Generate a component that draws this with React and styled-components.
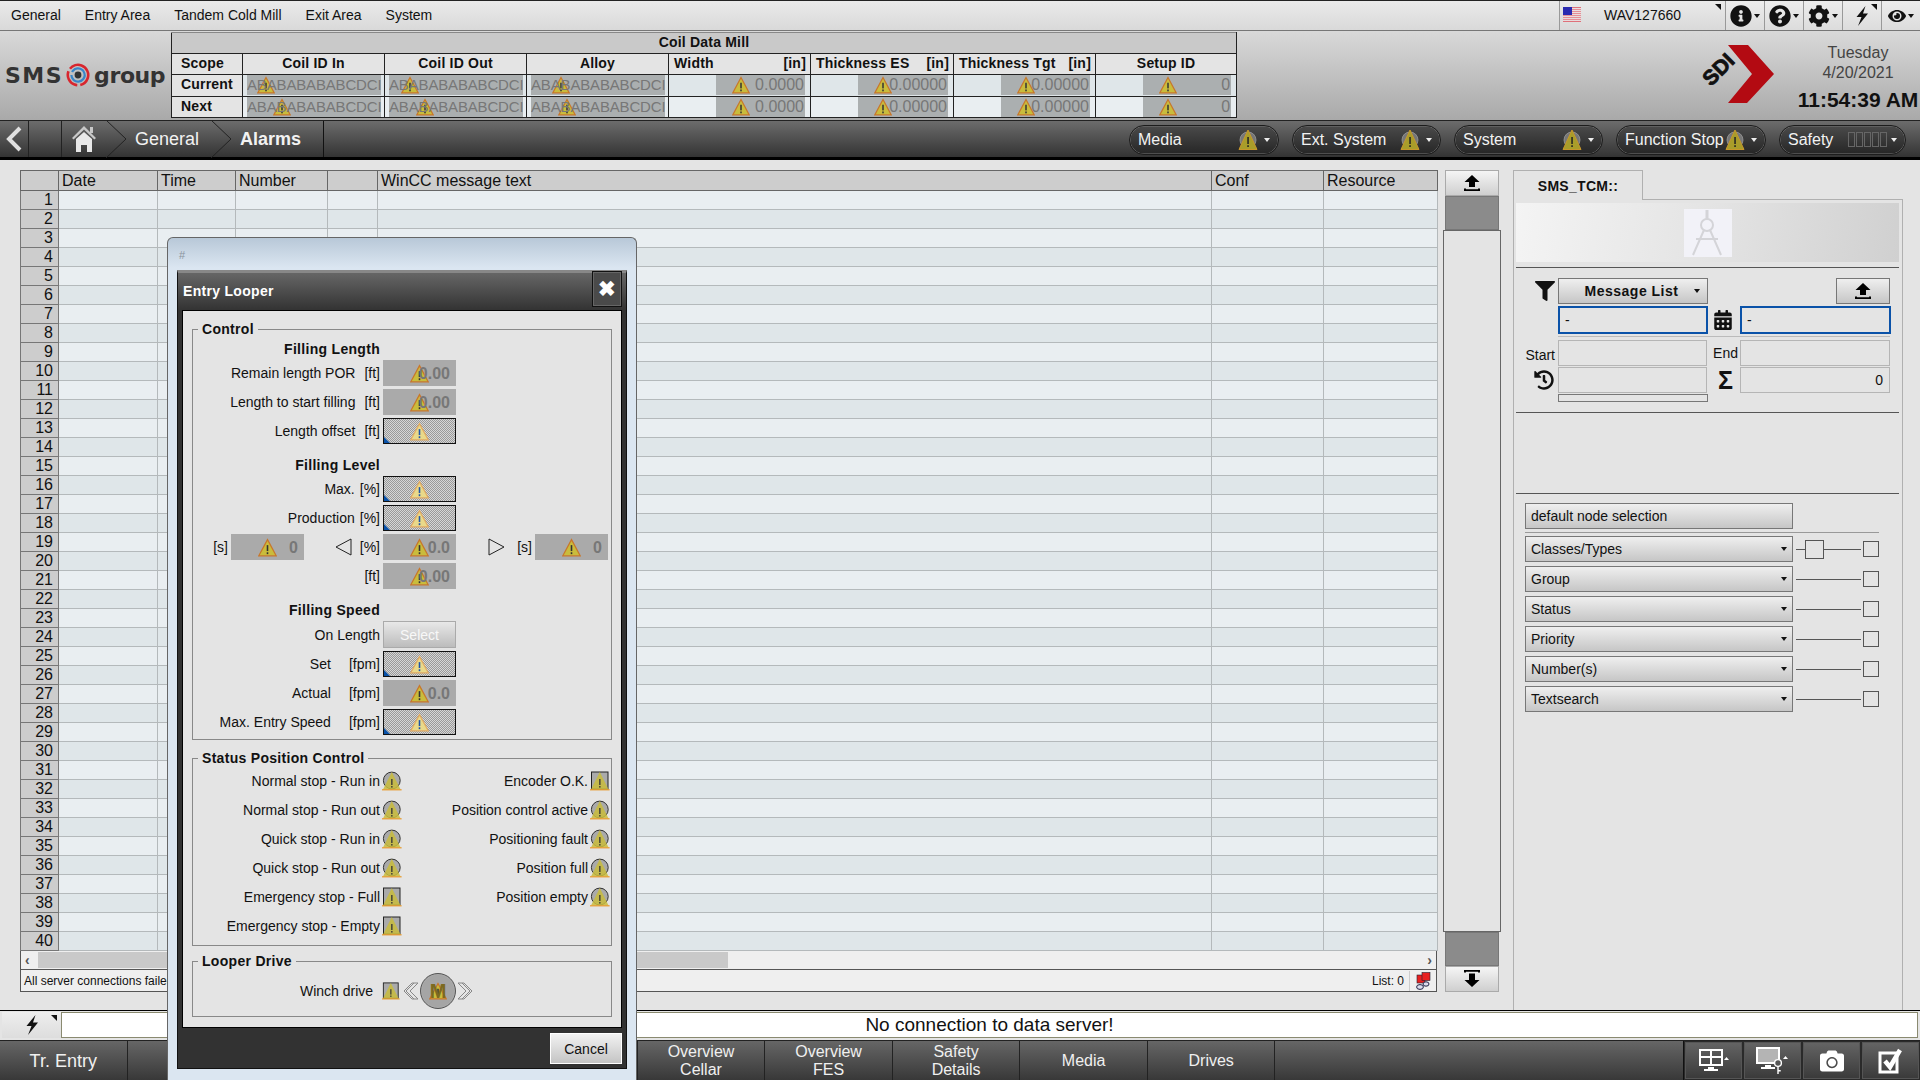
import React from 'react';
import styled, { createGlobalStyle } from 'styled-components';
import { FaCalendarAlt, FaCamera, FaCog, FaEye, FaFilter, FaHistory, FaInfoCircle, FaQuestionCircle } from 'react-icons/fa';

const GlobalStyle = createGlobalStyle`
  * { box-sizing: border-box; }
  html, body { margin: 0; width: 1920px; height: 1080px; overflow: hidden; background: #e4e4e4; }
  body { font-family: "Liberation Sans", Arial, sans-serif; font-size: 14px; color: #111; }
`;

const Screen = styled.div`
  position: relative;
  width: 1920px;
  height: 1080px;
  display: flex;
  flex-direction: column;
  overflow: hidden;
`;

/* top menu */
const MenuBar = styled.div`
  height: 31px;
  display: flex;
  align-items: stretch;
  border-top: 1px solid #222;
  border-bottom: 1px solid #777;
  background: linear-gradient(#eaeaea, #d9d9d9);
`;
const MenuItems = styled.div`
  flex: 1;
  display: flex;
  align-items: center;
  gap: 24px;
  padding: 0 0 2px 11px;
`;
const Locale = styled.div`
  position: relative;
  width: 166px;
  display: flex;
  align-items: center;
  padding: 0 0 2px 3px;
  border-left: 1px solid #999;
  span { margin-left: 23px; }
`;
const CornerMark = styled.i`
  position: absolute;
  top: 3px;
  right: 4px;
  width: 0;
  height: 0;
  border-top: 6px solid #111;
  border-left: 6px solid transparent;
`;
const ToolCell = styled.div`
  position: relative;
  width: 39px;
  display: flex;
  align-items: center;
  justify-content: center;
  gap: 2px;
  border-left: 1px solid #999;
  font-size: 22px;
  background: linear-gradient(#ececec, #dcdcdc);
  &:last-child { font-size: 18px; }
`;
const Caret = styled.i`
  display: inline-block;
  width: 0;
  height: 0;
  border-left: 3px solid transparent;
  border-right: 3px solid transparent;
  border-top: 4px solid ${(p) => p.$color || '#111'};
  margin-left: ${(p) => p.$gap || 0}px;
`;

/* header with coil data */
const Header = styled.div`
  height: 89px;
  display: flex;
  background: linear-gradient(#d9d9d9, #a9a9a9);
`;
const SmsLogo = styled.div`
  width: 171px;
  display: flex;
  align-items: center;
  padding: 0 0 1px 5px;
  font-family: "DejaVu Sans", "Liberation Sans", sans-serif;
  font-size: 22px;
  font-weight: bold;
  color: #333;
`;
const SmsWord = styled.span`
  letter-spacing: 1.5px;
  margin-right: 3px;
`;
const GroupWord = styled.span`
  letter-spacing: -0.4px;
  margin-left: 4px;
`;
const CoilTable = styled.table`
  width: 1065px;
  height: 86px;
  margin-top: 1px;
  border-collapse: collapse;
  table-layout: fixed;
  font-size: 14px;
  letter-spacing: 0.2px;
  th { height: 21px; padding: 0 3px 2px; border: 1px solid #222; background: #e4e4e4; font-weight: bold; }
  td { padding: 0; border: 1px solid #222; }
`;
const TitleCell = styled.th`
  && { background: #c9c9c9; height: 21px; border-top-color: #888; }
`;
const ScopeCell = styled.th`
  && { text-align: ${(p) => (p.$left ? 'left' : 'center')}; padding-left: 9px; }
`;
const HeadSplit = styled.div`
  display: flex;
  justify-content: space-between;
  padding-right: 1px;
  padding-left: 2px;
`;
const DataCell = styled.td`
  && { background: ${(p) => (p.$alt ? '#e9eef1' : '#dfe6e9')}; height: 21px; }
`;
const Shade = styled.div`
  position: relative;
  isolation: isolate;
  height: 20px;
  line-height: 20px;
  margin: 0 ${(p) => (p.$text ? 3 : 5)}px 0 ${(p) => (p.$text ? 4 : 47)}px;
  padding-right: 1px;
  background: #abafb0;
  color: #777;
  font-size: ${(p) => (p.$text ? 15 : 16)}px;
  font-weight: normal;
  letter-spacing: ${(p) => (p.$text ? -0.16 : 0)}px;
  text-align: ${(p) => (p.$text ? 'left' : 'right')};
  white-space: nowrap;
  overflow: hidden;
`;
const WarnSlot = styled.span`
  position: absolute;
  z-index: -1;
  left: ${(p) => p.$left}px;
  top: 50%;
  height: ${(p) => p.$size}px;
  margin-top: ${(p) => -p.$size / 2}px;
  line-height: 0;
`;
const ClockBox = styled.div`
  flex: 1;
  display: flex;
  justify-content: flex-end;
  padding-top: 12px;
`;
const ClockText = styled.div`
  width: 124px;
  text-align: center;
  color: #444;
  font-size: 16px;
  line-height: 20px;
  b { display: block; color: #111; font-size: 21px; line-height: 24px; margin-top: 5px; white-space: nowrap; }
`;
const SdiSvg = styled.svg`
  margin: 2px 20px 0 0;
  overflow: visible;
`;

/* breadcrumb bar */
const NavBar = styled.div`
  height: 40px;
  display: flex;
  align-items: stretch;
  padding-right: 14px;
  border-top: 1px solid #222;
  border-bottom: 3px solid #000;
  background: linear-gradient(#6c6c6c, #333);
  color: #f2f2f2;
`;
const NavSlot = styled.div`
  width: ${(p) => p.$w}px;
  display: flex;
  align-items: center;
  justify-content: center;
  border-right: 1px solid #222;
`;
const Crumbs = styled.div`
  width: 262px;
  display: flex;
  align-items: center;
  border-right: 1px solid #111;
  font-size: 18px;
`;
const Crumb = styled.span`
  margin: 0 12px 0 9px;
  font-weight: ${(p) => (p.$on ? 'bold' : 'normal')};
`;
const HomeSlot = styled.div`
  width: 44px;
  display: flex;
  justify-content: center;
`;
const Pills = styled.div`
  margin-left: auto;
  padding-top: 1px;
  display: flex;
  align-items: center;
  gap: 13px;
`;
const Pill = styled.div`
  width: ${(p) => p.$w}px;
  height: 30px;
  display: flex;
  align-items: center;
  padding: 0 8px;
  border: 1px solid #1c1c1c;
  border-radius: 15px;
  box-shadow: 0 0 0 0.5px #777 inset;
  background: linear-gradient(#4a4a4a, #262626);
  font-size: 16px;
  white-space: nowrap;
  span { flex: 1; }
`;
const SafetyBars = styled.div`
  display: flex;
  gap: 1px;
  i { display: block; width: 7px; height: 15px; border: 1px solid #666; }
`;

/* main area */
const Main = styled.div`
  height: 850px;
  display: flex;
  padding: 10px 0 0 20px;
  background: #e4e4e4;
`;
const ListColumn = styled.div`
  width: 1417px;
  height: 822px;
  display: flex;
  flex-direction: column;
`;
const AlarmTable = styled.table`
  width: 1417px;
  border-collapse: collapse;
  table-layout: fixed;
  font-size: 16px;
  th {
    height: 20px;
    padding: 0 0 0 3px;
    border: 1px solid #666;
    background: #cdcdcd;
    text-align: left;
    font-weight: normal;
    white-space: nowrap;
    overflow: hidden;
  }
  td { height: 19px; padding: 0; border: 1px solid #b4b9bb; line-height: 18px; }
  tr:nth-child(odd) td { background: #e9eef1; }
  tr:nth-child(even) td { background: #dfe6e9; }
  && td:first-child { background: #cdcdcd; border-color: #777; text-align: right; padding-right: 5px; }
`;
const HScroll = styled.div`
  height: 19px;
  display: flex;
  align-items: center;
  border: 1px solid #555;
  border-top: 0;
  background: #efefef;
  padding: 0 4px;
  color: #555;
  font-weight: bold;
  font-size: 14px;
`;
const HThumb = styled.div`
  width: 690px;
  height: 16px;
  margin-left: 8px;
  margin-right: auto;
  background: #c9c9c9;
`;
const ListStatus = styled.div`
  height: 22px;
  display: flex;
  align-items: center;
  border: 1px solid #555;
  border-top: 0;
  background: #efefef;
  font-size: 12px;
  padding-left: 3px;
  span:first-child { flex: 1; }
`;
const ListCount = styled.span`
  padding-right: 5px;
  border-right: 1px solid #ccc;
  line-height: 20px;
`;
const StatusFlag = styled.div`
  width: 26px;
  display: flex;
  justify-content: center;
`;
const ScrollColumn = styled.div`
  width: 58px;
  height: 822px;
  margin-left: 6px;
  display: flex;
  flex-direction: column;
  align-items: center;
`;
const ScrollBtn = styled.div`
  width: 54px;
  height: 26px;
  flex: none;
  display: flex;
  align-items: center;
  justify-content: center;
  border: 1px solid #aaa;
  background: linear-gradient(#f5f5f5, #cfcfcf);
`;
const ScrollEnd = styled.div`
  width: 54px;
  height: 34px;
  flex: none;
  background: #8b8b8b;
  border: 1px solid #777;
`;
const ScrollTrack = styled.div`
  width: 58px;
  flex: 1;
  border: 1px solid #666;
  background: #e4e4e4;
`;

/* right side panel */
const SideColumn = styled.div`
  width: 390px;
  margin-left: 12px;
  display: flex;
  flex-direction: column;
`;
const Tab = styled.div`
  position: relative;
  z-index: 1;
  width: 130px;
  height: 30px;
  margin-bottom: -1px;
  display: flex;
  align-items: center;
  justify-content: center;
  border: 1px solid #b0b0b0;
  border-bottom: 0;
  background: #e4e4e4;
  font-weight: bold;
  letter-spacing: 0.3px;
`;
const SidePanel = styled.div`
  flex: 1;
  padding: 3px 3px 0 2px;
  border: 1px solid #b0b0b0;
  border-bottom: 0;
`;
const Banner = styled.div`
  height: 59px;
  display: flex;
  align-items: center;
  justify-content: center;
  background: linear-gradient(100deg, #f4f4f4, #e2e2e2 55%, #d0d0d0);
`;
const CompassTile = styled.div`
  width: 48px;
  height: 48px;
  background: #f2f2f8;
`;
const Rule = styled.div`
  height: 1px;
  margin-top: ${(p) => p.$top}px;
  background: #555;
`;
const FormRow = styled.div`
  display: grid;
  grid-template-columns: 42px 150px 32px 151px;
  align-items: center;
  height: ${(p) => p.$h}px;
  margin-top: ${(p) => p.$top || 0}px;
  font-size: 14px;
`;
const IconCell = styled.div`
  display: flex;
  justify-content: flex-end;
  padding-top: ${(p) => p.$top || 0}px;
  padding-right: ${(p) => p.$pad ?? 3}px;
  font-size: ${(p) => p.$size || 20}px;
  font-weight: bold;
`;
const CellLabel = styled.span`
  font-weight: normal;
`;
const RawButton = styled.div`
  height: 26px;
  display: flex;
  align-items: center;
  border: 1px solid #777;
  background: linear-gradient(#efefef, #c6c6c6);
`;
const ListSelect = styled(RawButton)`
  justify-content: center;
  padding-left: 19px;
  font-weight: bold;
  letter-spacing: 0.5px;
  i { margin-left: 16px; }
`;
const UploadButton = styled(RawButton)`
  width: 54px;
  justify-content: center;
  margin-left: 96px;
`;
const BlueInput = styled.div`
  height: 28px;
  padding: 4px 5px;
  border: 2px solid #0a52a8;
  font-size: 14px;
`;
const SoftDivider = styled.div`
  height: 1px;
  margin: 2px 9px 0 42px;
  background: #bbb;
`;
const ReadBox = styled.div`
  height: 26px;
  margin: 0 1px 0 0;
  line-height: 24px;
  padding-right: 6px;
  text-align: right;
  border: 1px solid #b5b5b5;
`;
const ThinBar = styled.div`
  height: 8px;
  width: 150px;
  margin: 1px 0 0 42px;
  border: 1px solid #777;
`;
const FilterBlock = styled.div`
  padding: 9px 20px 0 9px;
  width: 100%;
`;
const WideButton = styled(RawButton)`
  width: 268px;
  padding-left: 5px;
`;
const ThinRule = styled.div`
  height: 1px;
  margin: 3px 0;
  background: #999;
`;
const FilterRow = styled.div`
  display: grid;
  grid-template-columns: 268px 1fr 16px;
  align-items: center;
  gap: 2px;
  height: 26px;
  margin-bottom: 4px;
`;
const FilterSelect = styled(RawButton)`
  justify-content: space-between;
  padding: 0 5px;
`;
const SliderTrack = styled.div`
  position: relative;
  height: 1px;
  margin-left: 1px;
  background: #555;
`;
const SliderThumb = styled.div`
  position: absolute;
  left: 9px;
  top: -9px;
  width: 19px;
  height: 19px;
  border: 1px solid #555;
  background: #e4e4e4;
`;
const TickBox = styled.div`
  width: 16px;
  height: 16px;
  border: 1px solid #555;
`;

/* command and bottom bars */
const CommandBar = styled.div`
  height: 30px;
  display: flex;
  padding: 1px 2px 2px 2px;
  border-top: 1px solid #000;
  background: #e4e4e4;
`;
const CommandBtn = styled.div`
  position: relative;
  width: 59px;
  display: flex;
  align-items: center;
  justify-content: center;
  background: linear-gradient(#eee, #ddd);
`;
const CommandText = styled.div`
  flex: 1;
  display: flex;
  align-items: center;
  justify-content: center;
  border: 1px solid #8a8a70;
  background: #fff;
  font-size: 19px;
`;
const BottomBar = styled.div`
  height: 40px;
  display: flex;
  border-top: 1px solid #222;
  background: linear-gradient(#666, #383838);
  color: #f0f0f0;
`;
const BottomBtn = styled.div`
  width: 127.55px;
  display: flex;
  align-items: center;
  justify-content: center;
  border-right: 1px solid #222;
  font-size: ${(p) => p.$size || 16}px;
  line-height: 18px;
  text-align: center;
`;
const BottomTools = styled.div`
  margin-left: auto;
  display: flex;
  border-left: 1px solid #111;
`;
const BottomTool = styled.div`
  width: 59px;
  display: flex;
  align-items: center;
  justify-content: center;
  border: 1px solid #2a2a2a;
  box-shadow: 0 0 0 1px #555 inset;
  color: #fff;
  font-size: 24px;
`;

/* entry looper window */
const Window = styled.div`
  position: absolute;
  left: 167px;
  top: 237px;
  width: 470px;
  height: 843px;
  padding: 32px 9px 11px;
  border: 1px solid #666;
  border-bottom: 0;
  border-radius: 6px 6px 0 0;
  background: linear-gradient(#b8c8d8, #dbe6f1 30px);
  z-index: 5;
`;
const WindowTag = styled.div`
  position: absolute;
  left: 11px;
  top: 11px;
  font-size: 11px;
  color: #8a949e;
`;
const WindowFrame = styled.div`
  height: 100%;
  display: flex;
  flex-direction: column;
  border: 1px solid #111;
  border-top: 3px solid #888;
  background: #323232;
`;
const TitleBar = styled.div`
  height: 37px;
  flex: none;
  display: flex;
  align-items: center;
  justify-content: space-between;
  padding: 0 0 2px 5px;
  background: linear-gradient(#666, #333);
  color: #fff;
  font-weight: bold;
  letter-spacing: 0.3px;
`;
const CloseBtn = styled.div`
  width: 30px;
  height: 36px;
  margin: -2px 4px 0 0;
  display: flex;
  align-self: flex-start;
  align-items: center;
  justify-content: center;
  border: 1px solid #111;
  box-shadow: 0 0 0 1px #666 inset;
  background: #4a4a4a;
  font-size: 21px;
`;
const WindowBody = styled.div`
  margin: 0 4px;
  padding: 0 9px 10px;
  border: 1px solid #000;
  background: #e4e4e4;
`;
const Group = styled.fieldset`
  margin: ${(p) => p.$top}px 0 0;
  padding: 0 0 ${(p) => p.$bottom}px;
  border: 1px solid #888;
`;
const GroupTitle = styled.legend`
  margin-left: 5px;
  padding: 0 4px;
  height: 16px;
  line-height: 16px;
  font-weight: bold;
  letter-spacing: 0.3px;
`;
const Section = styled.div`
  display: flex;
  flex-direction: column;
  gap: 3px;
  margin-top: ${(p) => p.$top}px;
`;
const SectionHead = styled.div`
  width: 187px;
  height: 15px;
  line-height: 15px;
  text-align: right;
  font-weight: bold;
  letter-spacing: 0.3px;
`;
const ControlRow = styled.div`
  display: grid;
  grid-template-columns: 187px 73px 1fr;
  column-gap: 3px;
  align-items: center;
  min-height: 26px;
`;
const LabelCell = styled.div`
  display: flex;
  align-items: center;
  justify-content: flex-end;
  gap: ${(p) => p.$gap ?? 9}px;
  width: ${(p) => (p.$w ? `${p.$w}px` : 'auto')};
  flex: ${(p) => (p.$grow ? 1 : 'none')};
  white-space: nowrap;
`;
const Field = styled.div`
  position: relative;
  isolation: isolate;
  height: 26px;
  width: 73px;
  flex: none;
  padding-right: 6px;
  line-height: 27px;
  text-align: right;
  background: #aaa;
  color: #777;
  font-size: 16px;
  font-weight: bold;
`;
const HatchField = styled.div`
  position: relative;
  isolation: isolate;
  height: 26px;
  border: 1px solid #111;
  background: repeating-conic-gradient(#999 0 25%, #d6d6d6 0 50%) 0 0 / 2px 2px;
  &::after {
    content: '';
    position: absolute;
    left: 0;
    bottom: 0;
    width: 6px;
    height: 6px;
    background: #0a52a8;
    clip-path: polygon(0 0, 100% 100%, 0 100%);
  }
`;
const SelectBtn = styled.div`
  height: 27px;
  display: flex;
  align-items: center;
  justify-content: center;
  border: 1px solid #aaa;
  background: linear-gradient(#e8e8e8, #bcbcbc);
  color: #f8f8f8;
`;
const SideRow = styled.div`
  display: flex;
  align-items: center;
  gap: 3px;
`;
const StatusGrid = styled.div`
  display: grid;
  grid-template-columns: 209px 208px;
  grid-auto-rows: 29px;
`;
const StatusItem = styled.div`
  display: flex;
  align-items: center;
  justify-content: flex-end;
  gap: 2px;
  white-space: nowrap;
`;
const DriveRow = styled.div`
  height: 38px;
  margin-top: 3px;
  padding-left: 107px;
  display: flex;
  align-items: center;
`;
const DriveLabel = styled.span`
  margin-right: 9px;
`;
const DriveLamp = styled.span`
  margin-right: 3px;
  line-height: 0;
`;
const Motor = styled.div`
  position: relative;
  isolation: isolate;
  width: 36px;
  height: 36px;
  margin: 0 1px;
  display: flex;
  align-items: center;
  justify-content: center;
  border: 1px solid #555;
  border-radius: 50%;
  box-shadow: 0 0 0 1px #aaa inset;
  background: #a5a5a5;
  font-size: 20px;
  font-weight: bold;
  color: #7c6a20;
`;
const WindowFooter = styled.div`
  flex: 1;
  display: flex;
  justify-content: flex-end;
  align-items: flex-start;
  padding: 5px 4px 0 0;
`;
const CancelBtn = styled.div`
  width: 72px;
  height: 31px;
  display: flex;
  align-items: center;
  justify-content: center;
  border: 1px solid #fff;
  background: linear-gradient(#f2f2f2, #c4c4c4);
`;

/* drawings */
const WARN_TONES = {
  solid: { fill: '#c9bc3c', line: '#c8772b', mark: '#333' },
  faded: { fill: '#e9d98a', line: '#e2ab63', mark: '#1f55a8' },
};

const Warn = ({ size = 18, tone = 'solid' }) => {
  const t = WARN_TONES[tone];
  return (
    <svg width={size} height={size} viewBox="0 0 24 24">
      <polygon points="12,2 23,22.5 1,22.5" fill={t.fill} stroke={t.line} strokeWidth="1.6" />
      <rect x="11" y="9" width="2" height="7.5" fill={t.mark} />
      <rect x="11" y="18" width="2" height="2.4" fill={t.mark} />
    </svg>
  );
};

const Lamp = ({ square, size = 20 }) => (
  <svg width={size} height={size} viewBox="0 0 20 20">
    {square ? (
      <rect x="1.5" y="1" width="16.5" height="17" fill="#aaa" stroke="#222" />
    ) : (
      <circle cx="9.8" cy="9.5" r="8.4" fill="#aaa" stroke="#333" />
    )}
    <polygon points="9.8,1 18.6,18.6 1,18.6" fill="#c9bc3c" opacity="0.85" />
    <rect x="0" y="18.2" width="19.6" height="1.2" fill="#e89a2a" />
    <rect x="9.2" y="8" width="1.3" height="6" fill="#333" />
    <rect x="9.2" y="15" width="1.3" height="1.6" fill="#333" />
  </svg>
);

const PillWarn = () => (
  <svg width="20" height="22" viewBox="0 0 20 22">
    <circle cx="10" cy="11" r="8" fill="#777" stroke="#999" strokeWidth="0.8" />
    <polygon points="10,1 19,20.5 1,20.5" fill="#a99d2a" stroke="#c8972a" strokeWidth="1" />
    <rect x="9.3" y="8" width="1.5" height="7" fill="#222" />
    <rect x="9.3" y="16.2" width="1.5" height="1.8" fill="#222" />
  </svg>
);

const BoltIcon = ({ height = 20 }) => (
  <svg width={height * 0.7} height={height} viewBox="0 0 14 20" fill="#111">
    <polygon points="10.5,0 1.5,11 6.5,11 3,20 13,7.5 8,7.5" />
  </svg>
);

const TrayArrow = ({ down }) => (
  <svg width="18" height="18" viewBox="0 0 18 18" fill="#000">
    {down ? (
      <>
        <path d="M1 0h16v2.4h-2v-.6H3v.6H1z" />
        <polygon points="6,3.5 12,3.5 12,10 16.5,10 9,17 1.5,10 6,10" />
      </>
    ) : (
      <>
        <polygon points="9,1 16.5,8 12,8 12,13 6,13 6,8 1.5,8" />
        <path d="M1 17h16v-2.4h-2v.6H3v-.6H1z" />
      </>
    )}
  </svg>
);

const UsFlag = () => (
  <svg width="18" height="15" viewBox="0 0 18 15">
    {[0, 1, 2, 3, 4, 5, 6, 7].map((i) => (
      <rect key={i} y={i * 2} width="18" height="1" fill="#d9545f" />
    ))}
    <rect y="0.5" width="18" height="14" fill="#f4d8da" opacity="0.45" />
    <rect width="9" height="8" fill="#2a2ab0" />
  </svg>
);

const SmsMark = () => (
  <svg width="24" height="24" viewBox="0 0 24 24" fill="none">
    <circle cx="12" cy="12" r="10.2" stroke="#d8262e" strokeWidth="2.6" strokeDasharray="26 3 19 3 13 0" transform="rotate(-70 12 12)" />
    <circle cx="12" cy="12" r="6.6" stroke="#3a86c8" strokeWidth="2.2" strokeDasharray="16 3 14 0" transform="rotate(40 12 12)" />
    <circle cx="12" cy="12" r="3.4" fill="#333" />
  </svg>
);

const SdiLogo = () => (
  <SdiSvg width="74" height="60" viewBox="0 0 74 60">
    <polygon points="26,0 46,0 72,29 45,58 26,58 50,29" fill="#b30a12" />
    <text x="0" y="0" transform="translate(9 42) rotate(-45)" fontFamily="Liberation Sans" fontWeight="bold" fontSize="21" stroke="#111" strokeWidth="0.8" fill="#111">SDI</text>
  </SdiSvg>
);

const HomeIcon = () => (
  <svg width="26" height="28" viewBox="0 0 26 28" fill="#c8c8c8">
    <path d="M13 1 25 13l-1.6 1.6L13 4.6 2.6 14.6 1 13z" />
    <rect x="19" y="2" width="3" height="6" />
    <path d="M5 14 13 7l8 7v13h-5v-7h-6v7H5z" fill="#e8e8e8" />
  </svg>
);

const CrumbSep = () => (
  <svg width="20" height="38" viewBox="0 0 20 38">
    <path d="M0 0 20 19 0 38" fill="none" stroke="#222" />
  </svg>
);

const BackIcon = () => (
  <svg width="18" height="26" viewBox="0 0 18 26">
    <path d="M15 2 4 13l11 11" fill="none" stroke="#e0e0e0" strokeWidth="4" />
  </svg>
);

const CompassIcon = () => (
  <svg width="48" height="48" viewBox="0 0 48 48" fill="none" stroke="#d4d4d8" strokeWidth="2">
    <path d="M23 1v10" strokeWidth="3" />
    <circle cx="23" cy="16" r="6" />
    <path d="M20 21 9 46M26 21l11 25M12 30h22" />
  </svg>
);

const SigmaGlyph = styled.span`
  font-size: 25px;
  line-height: 26px;
  font-weight: bold;
`;

const FlagsIcon = () => (
  <svg width="15" height="18" viewBox="0 0 15 18">
    <rect x="1" y="3" width="8" height="8" fill="#e82020" stroke="#223" strokeWidth="0.6" />
    <rect x="6" y="0.5" width="8" height="8" fill="#e82020" stroke="#223" strokeWidth="0.6" />
    <ellipse cx="4" cy="15" rx="3.4" ry="2.4" fill="#dde" stroke="#224" />
    <ellipse cx="10" cy="12" rx="3" ry="2.2" fill="#dde" stroke="#224" />
  </svg>
);

const DoubleChevron = ({ left }) => (
  <svg width="16" height="18" viewBox="0 0 16 18" fill="none" stroke="#888">
    {left ? <path d="M15 1H9L1 9l8 8h6L7 9zM11 1 3 9l8 8" /> : <path d="M1 1h6l8 8-8 8H1l8-8zM5 1l8 8-8 8" />}
  </svg>
);

const TriangleOutline = ({ left }) => (
  <svg width="17" height="18" viewBox="0 0 17 18" fill="none" stroke="#222">
    <polygon points={left ? '16,1 16,17 1,9' : '1,1 1,17 16,9'} />
  </svg>
);

const MonitorGrid = () => (
  <svg width="30" height="24" viewBox="0 0 30 24" fill="#fff">
    <path d="M0 0h24v17H0zm2 2v5h9V2zm11 0v5h9V2zM2 9v6h9V9zm11 0v6h9V9z" fillRule="evenodd" />
    <path d="M9 18h6v2h4v2H5v-2h4z" />
    <polygon points="25,11 30,11 27.5,8" />
  </svg>
);

const MonitorKey = () => (
  <svg width="34" height="28" viewBox="0 0 34 28" fill="#fff">
    <path d="M0 0h24v17H0z" />
    <rect x="2" y="2" width="20" height="13" fill="#b4b4b4" />
    <path d="M9 18h6v2h4v2H5v-2h4z" />
    <circle cx="22" cy="16" r="3.4" fill="#555" stroke="#fff" strokeWidth="1.4" />
    <path d="M21.3 19h1.4v8h-1.4zM22.7 23h2v1.4h-2z" />
    <polygon points="27,12 32,12 29.5,9" />
  </svg>
);

const CheckBoxIcon = () => (
  <svg width="26" height="28" viewBox="0 0 26 28" fill="none" stroke="#fff">
    <path d="M2 6h17v19H2z" strokeWidth="3" />
    <path d="M7 14l5 6 10-17" strokeWidth="4.5" />
  </svg>
);

/* data */
const COIL_IDS = ['ABABABABABCDCI', 'ABABABABABCDCI', 'ABABABABABCDCI'];
const CURRENT_MARKS = [10, 12, 21];
const NEXT_MARKS = [26, 27, 27];
const NUMERICS = ['0.0000', '0.00000', '0.00000', '0'];
const TOP_MENU = ['General', 'Entry Area', 'Tandem Cold Mill', 'Exit Area', 'System'];
const STATUS_ROWS = [
  ['Normal stop - Run in', false, 'Encoder O.K.', true],
  ['Normal stop - Run out', false, 'Position control active', false],
  ['Quick stop - Run in', false, 'Positioning fault', false],
  ['Quick stop - Run out', false, 'Position full', false],
  ['Emergency stop - Full', true, 'Position empty', false],
  ['Emergency stop - Empty', true, null, false],
];
const FILTERS = ['Classes/Types', 'Group', 'Status', 'Priority', 'Number(s)', 'Textsearch'];
const COLUMN_WIDTHS = [38, 99, 78, 92, 50, 834, 112, 114];
const COLUMNS = ['', 'Date', 'Time', 'Number', '', 'WinCC message text', 'Conf', 'Resource'];
const ROW_NUMBERS = Array.from({ length: 40 }, (_, i) => i + 1);

const CoilRow = ({ name, alt, marks }) => (
  <tr>
    <ScopeCell as="th" $left>{name}</ScopeCell>
    {COIL_IDS.map((id, i) => (
      <DataCell key={i} $alt={alt}>
        <Shade $text>
          {id}
          <WarnSlot $left={marks[i]} $size={18}><Warn /></WarnSlot>
        </Shade>
      </DataCell>
    ))}
    {NUMERICS.map((v, i) => (
      <DataCell key={i} $alt={alt}>
        <Shade>
          {v}
          <WarnSlot $left={16} $size={18}><Warn /></WarnSlot>
        </Shade>
      </DataCell>
    ))}
  </tr>
);

const ValueField = ({ value }) => (
  <Field>
    <WarnSlot $left={27} $size={19}><Warn size={19} /></WarnSlot>
    {value}
  </Field>
);

const InputField = () => (
  <HatchField>
    <WarnSlot $left={26} $size={19}><Warn size={19} tone="faded" /></WarnSlot>
  </HatchField>
);

const Labeled = ({ text, unit, gap }) => (
  <LabelCell $gap={gap}>
    <span>{text}</span>
    <span>{unit}</span>
  </LabelCell>
);

const EntryLooper = () => (
  <Window>
    <WindowTag>#</WindowTag>
    <WindowFrame>
      <TitleBar>
        Entry Looper
        <CloseBtn>✖</CloseBtn>
      </TitleBar>
      <WindowBody>
        <Group $top={10} $bottom={4}>
          <GroupTitle>Control</GroupTitle>
          <Section $top={5}>
            <SectionHead>Filling Length</SectionHead>
            <ControlRow><Labeled text="Remain length POR" unit="[ft]" /><ValueField value="0.00" /></ControlRow>
            <ControlRow><Labeled text="Length to start filling" unit="[ft]" /><ValueField value="0.00" /></ControlRow>
            <ControlRow><Labeled text="Length offset" unit="[ft]" /><InputField /></ControlRow>
          </Section>
          <Section $top={14}>
            <SectionHead>Filling Level</SectionHead>
            <ControlRow><Labeled text="Max." unit="[%]" gap={5} /><InputField /></ControlRow>
            <ControlRow><Labeled text="Production" unit="[%]" gap={5} /><InputField /></ControlRow>
            <ControlRow>
              <SideRow>
                <LabelCell $w={35}>[s]</LabelCell>
                <ValueField value="0" />
                <LabelCell $grow $gap={8}><TriangleOutline left /><span>[%]</span></LabelCell>
              </SideRow>
              <ValueField value="0.0" />
              <SideRow>
                <LabelCell $w={46}><TriangleOutline /></LabelCell>
                <LabelCell $w={24}>[s]</LabelCell>
                <ValueField value="0" />
              </SideRow>
            </ControlRow>
            <ControlRow><LabelCell>[ft]</LabelCell><ValueField value="0.00" /></ControlRow>
          </Section>
          <Section $top={14}>
            <SectionHead>Filling Speed</SectionHead>
            <ControlRow><LabelCell>On Length</LabelCell><SelectBtn>Select</SelectBtn></ControlRow>
            <ControlRow><Labeled text="Set" unit="[fpm]" gap={18} /><InputField /></ControlRow>
            <ControlRow><Labeled text="Actual" unit="[fpm]" gap={18} /><ValueField value="0.0" /></ControlRow>
            <ControlRow><Labeled text="Max. Entry Speed" unit="[fpm]" gap={18} /><InputField /></ControlRow>
          </Section>
        </Group>
        <Group $top={10} $bottom={5}>
          <GroupTitle>Status Position Control</GroupTitle>
          <StatusGrid>
            {STATUS_ROWS.map(([left, leftSquare, right, rightSquare]) => (
              <React.Fragment key={left}>
                <StatusItem>{left}<Lamp square={leftSquare} /></StatusItem>
                {right ? <StatusItem>{right}<Lamp square={rightSquare} /></StatusItem> : <span />}
              </React.Fragment>
            ))}
          </StatusGrid>
        </Group>
        <Group $top={7} $bottom={6}>
          <GroupTitle>Looper Drive</GroupTitle>
          <DriveRow>
            <DriveLabel>Winch drive</DriveLabel>
            <DriveLamp><Lamp square size={18} /></DriveLamp>
            <DoubleChevron left />
            <Motor>
              M
              <WarnSlot $left={8} $size={18}><Warn /></WarnSlot>
            </Motor>
            <DoubleChevron />
          </DriveRow>
        </Group>
      </WindowBody>
      <WindowFooter>
        <CancelBtn>Cancel</CancelBtn>
      </WindowFooter>
    </WindowFrame>
  </Window>
);

const App = () => (
  <Screen>
    <GlobalStyle />
    <MenuBar>
      <MenuItems>
        {TOP_MENU.map((m) => <span key={m}>{m}</span>)}
      </MenuItems>
      <Locale>
        <UsFlag />
        <span>WAV127660</span>
        <CornerMark />
      </Locale>
      <ToolCell><FaInfoCircle /><Caret /></ToolCell>
      <ToolCell><FaQuestionCircle /><Caret /></ToolCell>
      <ToolCell><FaCog /><Caret /></ToolCell>
      <ToolCell><BoltIcon /><CornerMark /></ToolCell>
      <ToolCell><FaEye /><Caret /></ToolCell>
    </MenuBar>

    <Header>
      <SmsLogo>
        <SmsWord>SMS</SmsWord>
        <SmsMark />
        <GroupWord>group</GroupWord>
      </SmsLogo>
      <CoilTable>
        <colgroup>
          <col width="71" />
          <col width="142" /><col width="142" /><col width="142" /><col width="142" />
          <col width="143" /><col width="142" /><col width="141" />
        </colgroup>
        <thead>
          <tr><TitleCell colSpan="8">Coil Data Mill</TitleCell></tr>
          <tr>
            <ScopeCell $left>Scope</ScopeCell>
            <th>Coil ID In</th>
            <th>Coil ID Out</th>
            <th>Alloy</th>
            <th><HeadSplit><span>Width</span><span>[in]</span></HeadSplit></th>
            <th><HeadSplit><span>Thickness ES</span><span>[in]</span></HeadSplit></th>
            <th><HeadSplit><span>Thickness Tgt</span><span>[in]</span></HeadSplit></th>
            <th>Setup ID</th>
          </tr>
        </thead>
        <tbody>
          <CoilRow name="Current" marks={CURRENT_MARKS} />
          <CoilRow name="Next" marks={NEXT_MARKS} alt />
        </tbody>
      </CoilTable>
      <ClockBox>
        <SdiLogo />
        <ClockText>
          Tuesday<br />4/20/2021
          <b>11:54:39 AM</b>
        </ClockText>
      </ClockBox>
    </Header>

    <NavBar>
      <NavSlot $w={29}><BackIcon /></NavSlot>
      <NavSlot $w={33} />
      <Crumbs>
        <HomeSlot><HomeIcon /></HomeSlot>
        <CrumbSep />
        <Crumb>General</Crumb>
        <CrumbSep />
        <Crumb $on>Alarms</Crumb>
      </Crumbs>
      <Pills>
        <Pill $w={150}><span>Media</span><PillWarn /><Caret $color="#eee" $gap={6} /></Pill>
        <Pill $w={149}><span>Ext. System</span><PillWarn /><Caret $color="#eee" $gap={6} /></Pill>
        <Pill $w={149}><span>System</span><PillWarn /><Caret $color="#eee" $gap={6} /></Pill>
        <Pill $w={150}><span>Function Stop</span><PillWarn /><Caret $color="#eee" $gap={6} /></Pill>
        <Pill $w={127}>
          <span>Safety</span>
          <SafetyBars><i /><i /><i /><i /><i /></SafetyBars>
          <Caret $color="#eee" $gap={4} />
        </Pill>
      </Pills>
    </NavBar>

    <Main>
      <ListColumn>
        <AlarmTable>
          <colgroup>
            {COLUMN_WIDTHS.map((w, i) => <col key={i} width={w} />)}
          </colgroup>
          <thead>
            <tr>{COLUMNS.map((c, i) => <th key={i}>{c}</th>)}</tr>
          </thead>
          <tbody>
            {ROW_NUMBERS.map((n) => (
              <tr key={n}>
                <td>{n}</td>
                {COLUMNS.slice(1).map((c, i) => <td key={i} />)}
              </tr>
            ))}
          </tbody>
        </AlarmTable>
        <HScroll>
          ‹
          <HThumb />
          ›
        </HScroll>
        <ListStatus>
          <span>All server connections failed</span>
          <ListCount>List: 0</ListCount>
          <StatusFlag><FlagsIcon /></StatusFlag>
        </ListStatus>
      </ListColumn>

      <ScrollColumn>
        <ScrollBtn><TrayArrow /></ScrollBtn>
        <ScrollEnd />
        <ScrollTrack />
        <ScrollEnd />
        <ScrollBtn><TrayArrow down /></ScrollBtn>
      </ScrollColumn>

      <SideColumn>
        <Tab>SMS_TCM::</Tab>
        <SidePanel>
          <Banner>
            <CompassTile><CompassIcon /></CompassTile>
          </Banner>
          <Rule $top={5} />
          <FormRow $h={26} $top={10}>
            <IconCell><FaFilter /></IconCell>
            <ListSelect>Message List<Caret /></ListSelect>
            <span />
            <UploadButton><TrayArrow /></UploadButton>
          </FormRow>
          <FormRow $h={28} $top={2}>
            <span />
            <BlueInput>-</BlueInput>
            <IconCell $pad={7}><FaCalendarAlt /></IconCell>
            <BlueInput>-</BlueInput>
          </FormRow>
          <SoftDivider />
          <FormRow $h={26} $top={3}>
            <IconCell $size={14} $top={3}><CellLabel>Start</CellLabel></IconCell>
            <ReadBox />
            <IconCell $size={14} $pad={2}><CellLabel>End</CellLabel></IconCell>
            <ReadBox />
          </FormRow>
          <FormRow $h={26} $top={1}>
            <IconCell $pad={4}><FaHistory /></IconCell>
            <ReadBox />
            <IconCell $pad={7}><SigmaGlyph>Σ</SigmaGlyph></IconCell>
            <ReadBox>0</ReadBox>
          </FormRow>
          <ThinBar />
          <Rule $top={10} />
          <Rule $top={80} />
          <FilterBlock>
            <WideButton>default node selection</WideButton>
            <ThinRule />
            {FILTERS.map((f, i) => (
              <FilterRow key={f}>
                <FilterSelect>{f}<Caret /></FilterSelect>
                <SliderTrack>{i === 0 && <SliderThumb />}</SliderTrack>
                <TickBox />
              </FilterRow>
            ))}
          </FilterBlock>
        </SidePanel>
      </SideColumn>
    </Main>

    <CommandBar>
      <CommandBtn><BoltIcon /><CornerMark /></CommandBtn>
      <CommandText>No connection to data server!</CommandText>
    </CommandBar>

    <BottomBar>
      <BottomBtn $size={18}>Tr. Entry</BottomBtn>
      <BottomBtn /><BottomBtn /><BottomBtn /><BottomBtn />
      <BottomBtn>Overview<br />Cellar</BottomBtn>
      <BottomBtn>Overview<br />FES</BottomBtn>
      <BottomBtn>Safety<br />Details</BottomBtn>
      <BottomBtn>Media</BottomBtn>
      <BottomBtn>Drives</BottomBtn>
      <BottomTools>
        <BottomTool><MonitorGrid /></BottomTool>
        <BottomTool><MonitorKey /></BottomTool>
        <BottomTool><FaCamera /></BottomTool>
        <BottomTool><CheckBoxIcon /></BottomTool>
      </BottomTools>
    </BottomBar>

    <EntryLooper />
  </Screen>
);

export default App;
